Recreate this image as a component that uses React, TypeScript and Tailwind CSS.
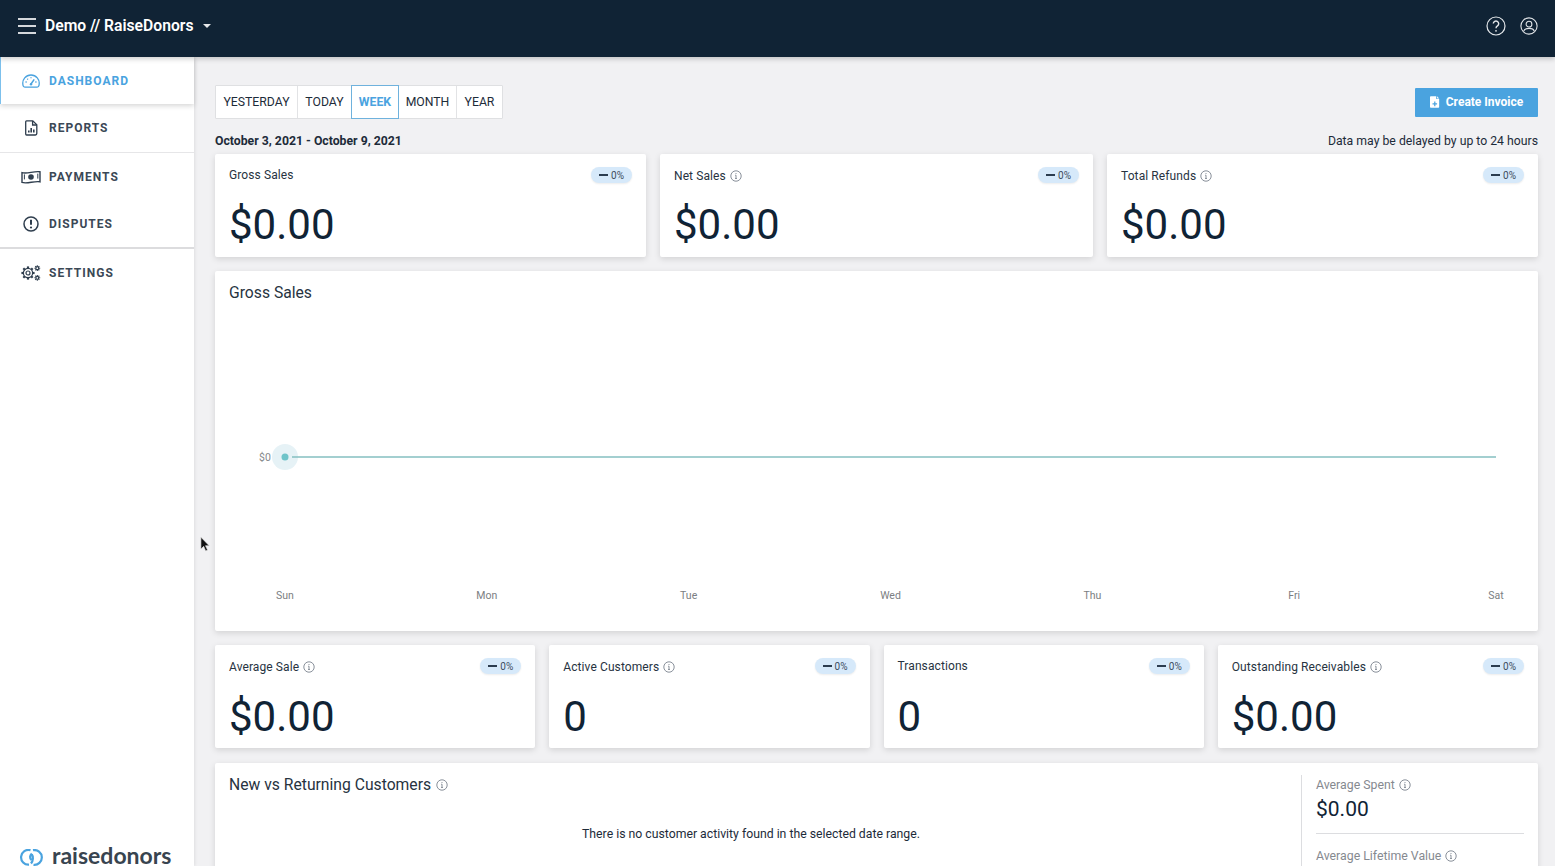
import React from "react";

const InfoIcon = ({ className = "" }: { className?: string }) => (
    <svg viewBox="0 0 12 12" className={`inline-block w-3 h-3 ${className}`} fill="none" stroke="#6b7480" strokeWidth="0.8">
        <circle cx="6" cy="6" r="5.2" />
        <path d="M6 5.2v3.2M5.1 8.5h1.8M5.2 5.2H6" />
        <circle cx="6" cy="3.5" r="0.5" fill="#6b7480" stroke="none" />
    </svg>
);

const Badge = () => (
    <span className="flex items-center gap-[3px] h-[16px] w-[41px] justify-center rounded-full bg-[#d6e9fa] shadow-[0_1px_2px_rgba(0,0,0,0.08)] text-[10px] text-[#3d4d5e]">
        <span className="w-[9px] h-[2px] bg-[#2b3c4f]"></span>0%
    </span>
);

const StatCard = ({ title, value, info, low }: { title: string; value: string; info?: boolean; low?: boolean }) => (
    <div className="bg-white rounded-[2px] shadow-[0_2px_6px_rgba(0,0,0,0.13)] h-[103px] px-[14px] pt-[13px]">
        <div className="flex justify-between items-start h-[16px]">
            <span className={`text-[12px] leading-[16px] text-[#27333f] tracking-[0.1px] flex items-center gap-[3px] ${info ? "mt-[1px]" : ""}`}>
                {title}
                {info && <InfoIcon className="ml-[1px]" />}
            </span>
            <Badge />
        </div>
        <div className={`text-[42px] leading-[50px] text-[#102335] ${low ? "mt-[18px]" : "mt-[17px]"}`}>{value}</div>
    </div>
);

const GaugeIcon = () => (
    <svg viewBox="0 0 18 14" className="w-[18px] h-[14px]" fill="none" stroke="#4aa3df" strokeWidth="1.3">
        <path d="M3.2 13.2h11.6a2.4 2.4 0 0 0 2.3-2.6A8.2 8.2 0 0 0 9 1 8.2 8.2 0 0 0 .9 10.6a2.4 2.4 0 0 0 2.3 2.6z" />
        <path d="M9 10l3.2-4.6" strokeWidth="1.5" />
        <circle cx="9" cy="10.2" r="1.2" fill="#4aa3df" stroke="none" />
        <path d="M3.5 8h1.2M5.3 4.8l.7.7M9 3.2v1.1M13.3 8h1.2" />
    </svg>
);

const ReportIcon = () => (
    <svg viewBox="0 0 13 16" className="w-[13px] h-[16px]" fill="none" stroke="#2f3e4e" strokeWidth="1.3">
        <path d="M1.6.8h6.2l4 4v8.8a1.4 1.4 0 0 1-1.4 1.4H1.6A1 1 0 0 1 .7 14V1.8a1 1 0 0 1 .9-1z" />
        <path d="M7.6 1v4h4.2" />
        <path d="M3.8 12.6v-2M6.2 12.6V8M8.8 12.6V9.6" strokeWidth="1.6" />
    </svg>
);

const MoneyIcon = () => (
    <svg viewBox="0 0 20 14" className="w-[20px] h-[14px]" fill="none" stroke="#2f3e4e" strokeWidth="1.4">
        <path d="M1 2.6c5 1.6 12-1.8 18-.8v10c-6-1-13 2.4-18 .6z" />
        <circle cx="10" cy="7" r="2.8" fill="#2f3e4e" stroke="none" />
        <path d="M3.4 4.4v5M16.8 3.6v5" strokeWidth="1" />
    </svg>
);

const AlertIcon = () => (
    <svg viewBox="0 0 16 16" className="w-[16px] h-[16px]" fill="none" stroke="#2f3e4e" strokeWidth="1.5">
        <circle cx="8" cy="8" r="7" />
        <path d="M8 3.8v5" strokeWidth="2" />
        <circle cx="8" cy="11.5" r="1.1" fill="#2f3e4e" stroke="none" />
    </svg>
);

const gearTeeth = [0, 45, 90, 135, 180, 225, 270, 315];

const CogsIcon = () => (
    <svg viewBox="0 0 20 16" className="w-[20px] h-[16px]" fill="none" stroke="#2f3e4e" strokeWidth="1.2">
        <circle cx="7" cy="8" r="4.600" />
        <circle cx="7" cy="8" r="2" />
        {gearTeeth.map((a) => (
            <path key={a} d="M7 1.400v2" strokeWidth="2.200" transform={`rotate(${a} 7 8)`} />
        ))}
        <circle cx="16.300" cy="3.200" r="1.500" strokeWidth="1.300" />
        <circle cx="16.300" cy="12.800" r="1.500" strokeWidth="1.300" />
        {gearTeeth.map((a) => (
            <path key={a} d="M16.300 0.300v1" strokeWidth="1.100" transform={`rotate(${a} 16.300 3.200)`} />
        ))}
        {gearTeeth.map((a) => (
            <path key={a} d="M16.300 9.900v1" strokeWidth="1.100" transform={`rotate(${a} 16.300 12.800)`} />
        ))}
    </svg>
);

const navItems = [
    { label: "DASHBOARD", icon: <GaugeIcon />, h: "h-[47px]", active: true },
    { label: "REPORTS", icon: <ReportIcon />, h: "h-[49px] border-b border-[#e6e6e8]", active: false },
    { label: "PAYMENTS", icon: <MoneyIcon />, h: "h-[47px]", active: false },
    { label: "DISPUTES", icon: <AlertIcon />, h: "h-[49px] border-b-2 border-[#dcdcde]", active: false },
    { label: "SETTINGS", icon: <CogsIcon />, h: "h-[47px]", active: false },
];

const days = ["Sun", "Mon", "Tue", "Wed", "Thu", "Fri", "Sat"];

const tabs = [
    { label: "YESTERDAY", w: "w-[82px] border-r border-[#e2e3e5] text-[#1d2b39]" },
    { label: "TODAY", w: "w-[53px] text-[#1d2b39]" },
    { label: "WEEK", w: "w-[48px] -my-[1px] font-bold text-[#4aa3df] border border-[#6fb2dd]" },
    { label: "MONTH", w: "w-[58px] border-r border-[#e2e3e5] text-[#1d2b39]" },
    { label: "YEAR", w: "w-[45px] text-[#1d2b39]" },
];

export default function App() {
    return (
        <div className="relative h-[866px] w-[1555px] overflow-hidden flex flex-col bg-[#f1f1f3] font-['Roboto',sans-serif]">
            <header className="relative z-20 h-[57px] shrink-0 bg-[#102335] flex items-center justify-between pl-[18px] pr-[17px] shadow-[0_2px_5px_rgba(0,0,0,0.2)]">
                <div className="flex items-center -mt-[5px]">
                    <div className="flex flex-col gap-[5.500px] w-[18px]">
                        <span className="h-[1.500px] bg-[#d5d8dc]"></span>
                        <span className="h-[1.500px] bg-[#d5d8dc]"></span>
                        <span className="h-[1.500px] bg-[#d5d8dc]"></span>
                    </div>
                    <span className="ml-[9px] text-[15.700px] font-semibold text-white">Demo // RaiseDonors</span>
                    <span className="ml-[9px] mt-[1px] w-0 h-0 border-l-[4px] border-r-[4px] border-t-[4px] border-l-transparent border-r-transparent border-t-[#e6e8ea]"></span>
                </div>
                <div className="flex items-center gap-[14px] -mt-[5px]">
                    <svg viewBox="0 0 20 20" className="w-[20px] h-[20px]" fill="none" stroke="#e3e6e9" strokeWidth="1.200">
                        <circle cx="10" cy="10" r="9" />
                        <path d="M7.300 7.600a2.700 2.700 0 1 1 4.200 2.300c-1 .7-1.500 1.100-1.500 2.300" strokeWidth="1.400" />
                        <circle cx="10" cy="14.800" r="0.900" fill="#e3e6e9" stroke="none" />
                    </svg>
                    <svg viewBox="0 0 20 20" className="w-[18px] h-[18px]" fill="none" stroke="#e3e6e9" strokeWidth="1.200">
                        <circle cx="10" cy="10" r="9" />
                        <circle cx="10" cy="8" r="3.200" />
                        <path d="M4.200 15.800c.6-2.400 2.600-3.200 5.800-3.200s5.200.8 5.800 3.200" />
                    </svg>
                </div>
            </header>

            <div className="flex flex-1 min-h-0">
                <aside className="relative z-10 w-[194px] shrink-0 bg-white shadow-[1px_0_3px_rgba(0,0,0,0.08)] flex flex-col justify-between">
                    <nav>
                        {navItems.map((item) => (
                            <div
                                key={item.label}
                                className={`flex items-center ${item.h} ${item.active ? "border-l border-[#7cc0ec] shadow-[0_2px_5px_rgba(0,0,0,0.16)] relative" : ""}`}
                            >
                                <span className={`flex justify-center w-[22px] ${item.active ? "ml-[19px]" : "ml-[20px]"}`}>{item.icon}</span>
                                <span className={`ml-[7px] text-[12px] font-bold tracking-[1px] ${item.active ? "text-[#4aa3df]" : "text-[#3b4856]"}`}>{item.label}</span>
                            </div>
                        ))}
                    </nav>
                    <div className="flex items-end pl-[18px] h-[21px]">
                        <svg viewBox="0 0 27 17" className="w-[27px] h-[17px]" fill="none" stroke="#4aa3df" strokeWidth="2.200">
                            <path d="M11 15.700A7.400 7.400 0 1 1 12.500 1.200" />
                            <path d="M15.500 15.800A7.400 7.400 0 1 0 15 1.200" />
                            <path d="M13.800 4.500c-2.200 2-2.200 4.800-.4 6.400M13.800 5.500c1.700 2 1.500 6-.8 9" />
                        </svg>
                        <span className="ml-[7px] text-[23px] leading-[21px] font-['Lato',sans-serif] font-bold text-[#38444f]">raisedonors</span>
                    </div>
                </aside>

                <main className="flex-1 min-w-0 pl-[21px] pr-[17px] pt-[28px] overflow-hidden">
                    <div className="flex justify-between items-center h-[34px]">
                        <div className="flex h-[34px] bg-white border border-[#dfe0e2] rounded-[1px]">
                            {tabs.map((tab) => (
                                <div key={tab.label} className={`flex items-center justify-center text-[12.250px] ${tab.w}`}>
                                    {tab.label}
                                </div>
                            ))}
                        </div>
                        <button className="flex items-center justify-center w-[123px] h-[29px] bg-[#4aa3df] rounded-[1px] text-white text-[12px] font-bold">
                            <svg viewBox="0 0 12 14" className="w-[10px] h-[12px] mr-[6px]" fill="white">
                                <path d="M1 0h6.500v3.500H11V13a1 1 0 0 1-1 1H1a1 1 0 0 1-1-1V1a1 1 0 0 1 1-1zM8.500.2L11 2.700H8.500zM5 6.500v2H3v1.500h2v2h1.500v-2h2V8.500h-2v-2z" fillRule="evenodd" />
                            </svg>
                            Create Invoice
                        </button>
                    </div>

                    <div className="flex justify-between items-center h-[16px] mt-[14px] mb-[5px] text-[12.250px] text-[#1d2b39]">
                        <span className="font-bold">October 3, 2021 - October 9, 2021</span>
                        <span>Data may be delayed by up to 24 hours</span>
                    </div>

                    <div className="grid grid-cols-[431px_433px_431px] gap-[14px]">
                        <StatCard title="Gross Sales" value="$0.00" />
                        <StatCard title="Net Sales" value="$0.00" info />
                        <StatCard title="Total Refunds" value="$0.00" info />
                    </div>

                    <div className="mt-[14px] h-[360px] bg-white rounded-[2px] shadow-[0_2px_6px_rgba(0,0,0,0.13)] flex flex-col">
                        <div className="px-[14px] pt-[12px] text-[15.700px] leading-[20px] text-[#27333f]">Gross Sales</div>
                        <svg viewBox="0 0 1323 328" className="w-[1323px] h-[328px]">
                            <circle cx="70" cy="154" r="13" fill="#e6f2f6" />
                            <circle cx="70" cy="154" r="3.500" fill="#6fc4c9" />
                            <line x1="77" y1="154" x2="1281" y2="154" stroke="#85bfc1" strokeWidth="1.500" />
                            <text x="50" y="158" textAnchor="middle" fontSize="10.500" fill="#85888c" fontFamily="Roboto">$0</text>
                            {days.map((d, i) => (
                                <text key={d} x={70 + i * 201.83} y="296" textAnchor="middle" fontSize="10.500" fill="#7b7e82" fontFamily="Roboto">{d}</text>
                            ))}
                        </svg>
                    </div>

                    <div className="mt-[14px] grid grid-cols-4 gap-[14px]">
                        <StatCard title="Average Sale" value="$0.00" info low />
                        <StatCard title="Active Customers" value="0" info low />
                        <StatCard title="Transactions" value="0" low />
                        <StatCard title="Outstanding Receivables" value="$0.00" info low />
                    </div>

                    <div className="mt-[15px] h-[200px] bg-white rounded-[2px] shadow-[0_2px_6px_rgba(0,0,0,0.13)] flex pl-[14px] pr-[14px] pt-[12px]">
                        <div className="flex-1 min-w-0">
                            <div className="flex items-center gap-[5px] text-[15.700px] leading-[20px] text-[#27333f]">
                                New vs Returning Customers <InfoIcon />
                            </div>
                            <div className="mt-[31px] text-center text-[12.250px] leading-[16px] text-[#1d2b39] pr-[8px]">
                                There is no customer activity found in the selected date range.
                            </div>
                        </div>
                        <div className="w-[223px] shrink-0 ml-[20px] border-l border-[#dcdde0] pl-[14px] pt-[1px] self-stretch">
                            <div className="flex items-center gap-[4px] text-[12.300px] leading-[18px] text-[#85898f]">
                                Average Spent <InfoIcon />
                            </div>
                            <div className="text-[21px] leading-[28px] text-[#102335] mt-[1px] pb-[10px] border-b border-[#dcdde0]">$0.00</div>
                            <div className="flex items-center gap-[4px] mt-[13px] text-[12.300px] leading-[18px] text-[#85898f]">
                                Average Lifetime Value <InfoIcon />
                            </div>
                        </div>
                    </div>
                </main>
            </div>

            <svg viewBox="0 0 12 18" className="absolute left-[200px] top-[536px] z-30 w-[11px] h-[17px]">
                <path d="M1 1v13l3-3 2.200 5 2-1-2.200-4.700h4z" fill="#111" stroke="#ddd" strokeWidth="0.700" />
            </svg>
        </div>
    );
}
